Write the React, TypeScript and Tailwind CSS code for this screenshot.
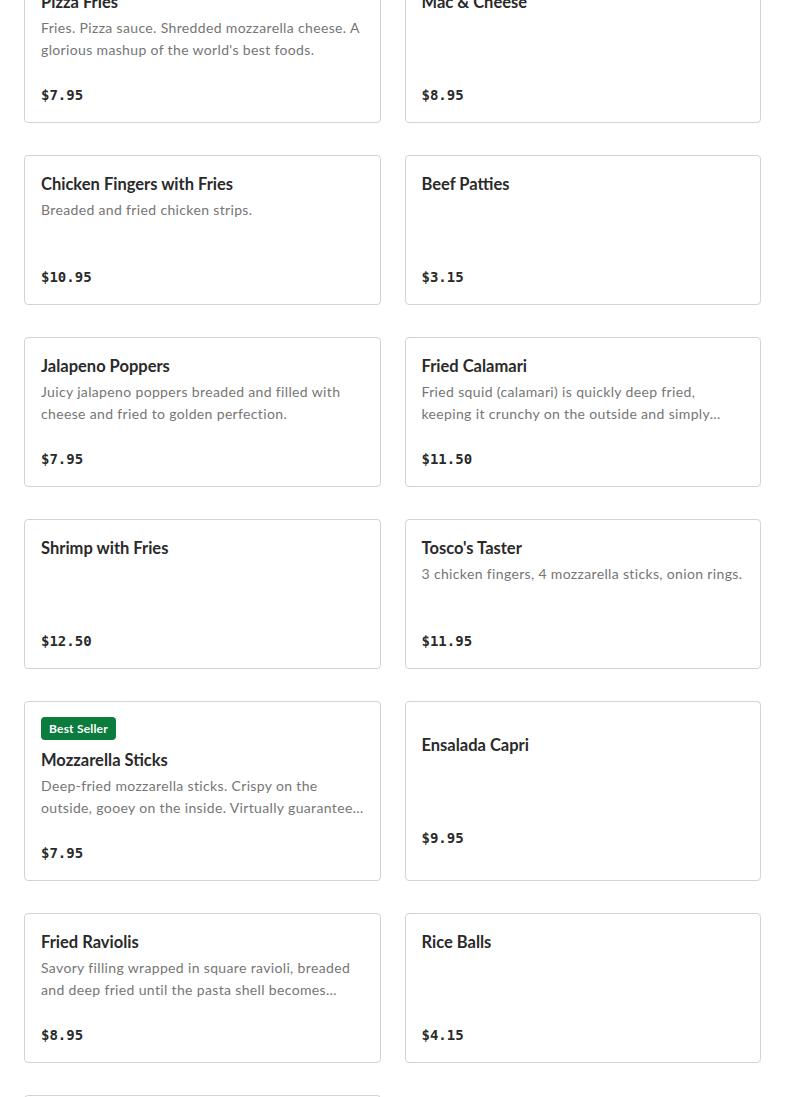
import React from 'react'

type Item = {
  name: string
  desc?: string
  price: string
  badge?: string
}

const ROWS: Item[][] = [
  [
    { name: 'Pizza Fries', desc: "Fries. Pizza sauce. Shredded mozzarella cheese. A glorious mashup of the world's best foods.", price: '$7.95' },
    { name: 'Mac & Cheese', price: '$8.95' },
  ],
  [
    { name: 'Chicken Fingers with Fries', desc: 'Breaded and fried chicken strips.', price: '$10.95' },
    { name: 'Beef Patties', price: '$3.15' },
  ],
  [
    { name: 'Jalapeno Poppers', desc: 'Juicy jalapeno poppers breaded and filled with cheese and fried to golden perfection.', price: '$7.95' },
    { name: 'Fried Calamari', desc: 'Fried squid (calamari) is quickly deep fried, keeping it crunchy on the outside and simply tender on the inside.', price: '$11.50' },
  ],
  [
    { name: 'Shrimp with Fries', price: '$12.50' },
    { name: "Tosco's Taster", desc: '3 chicken fingers, 4 mozzarella sticks, onion rings.', price: '$11.95' },
  ],
  [
    { name: 'Mozzarella Sticks', badge: 'Best Seller', desc: 'Deep-fried mozzarella sticks. Crispy on the outside, gooey on the inside. Virtually guaranteed to please everyone.', price: '$7.95' },
    { name: 'Ensalada Capri', price: '$9.95' },
  ],
  [
    { name: 'Fried Raviolis', desc: 'Savory filling wrapped in square ravioli, breaded and deep fried until the pasta shell becomes golden and crisp.', price: '$8.95' },
    { name: 'Rice Balls', price: '$4.15' },
  ],
  [
    { name: 'Garlic Knots', desc: 'Fresh baked knots tossed in garlic butter and parmesan.', price: '$5.95' },
  ],
]

function MenuCard({ item }: { item: Item }) {
  return (
    <div className="flex min-h-[150px] flex-col justify-center rounded-[4px] border border-[#d3d3d3] bg-white px-4 pt-[15px] pb-[16px]">
      {item.badge && (
        <div className="mb-2 self-start rounded-[4px] bg-[#0b7b3e] px-2 text-[12px] leading-[23px] font-bold tracking-[0.2px] text-white">
          {item.badge}
        </div>
      )}
      <h3 className="text-[16.5px] leading-6 font-bold text-[#2a2a2a]">{item.name}</h3>
      <p className="mt-[3px] line-clamp-2 h-[44px] text-[14px] leading-[22px] tracking-[0.35px] text-[#767676]">
        {item.desc}
      </p>
      <div className="mt-[23px] text-[14px] leading-[22px] font-bold text-[#2a2a2a] [font-family:'DejaVu_Sans_Mono',monospace]">
        {item.price}
      </div>
    </div>
  )
}

export default function App() {
  return (
    <div className="min-h-screen overflow-hidden bg-white [font-family:Lato,'Noto_Sans',sans-serif]">
      <div className="-mt-[27px] flex flex-col gap-8 px-6">
        {ROWS.map((row, i) => (
          <div key={i} className="grid grid-cols-2 gap-6">
            {row.map(item => (
              <MenuCard key={item.name} item={item} />
            ))}
          </div>
        ))}
      </div>
    </div>
  )
}
